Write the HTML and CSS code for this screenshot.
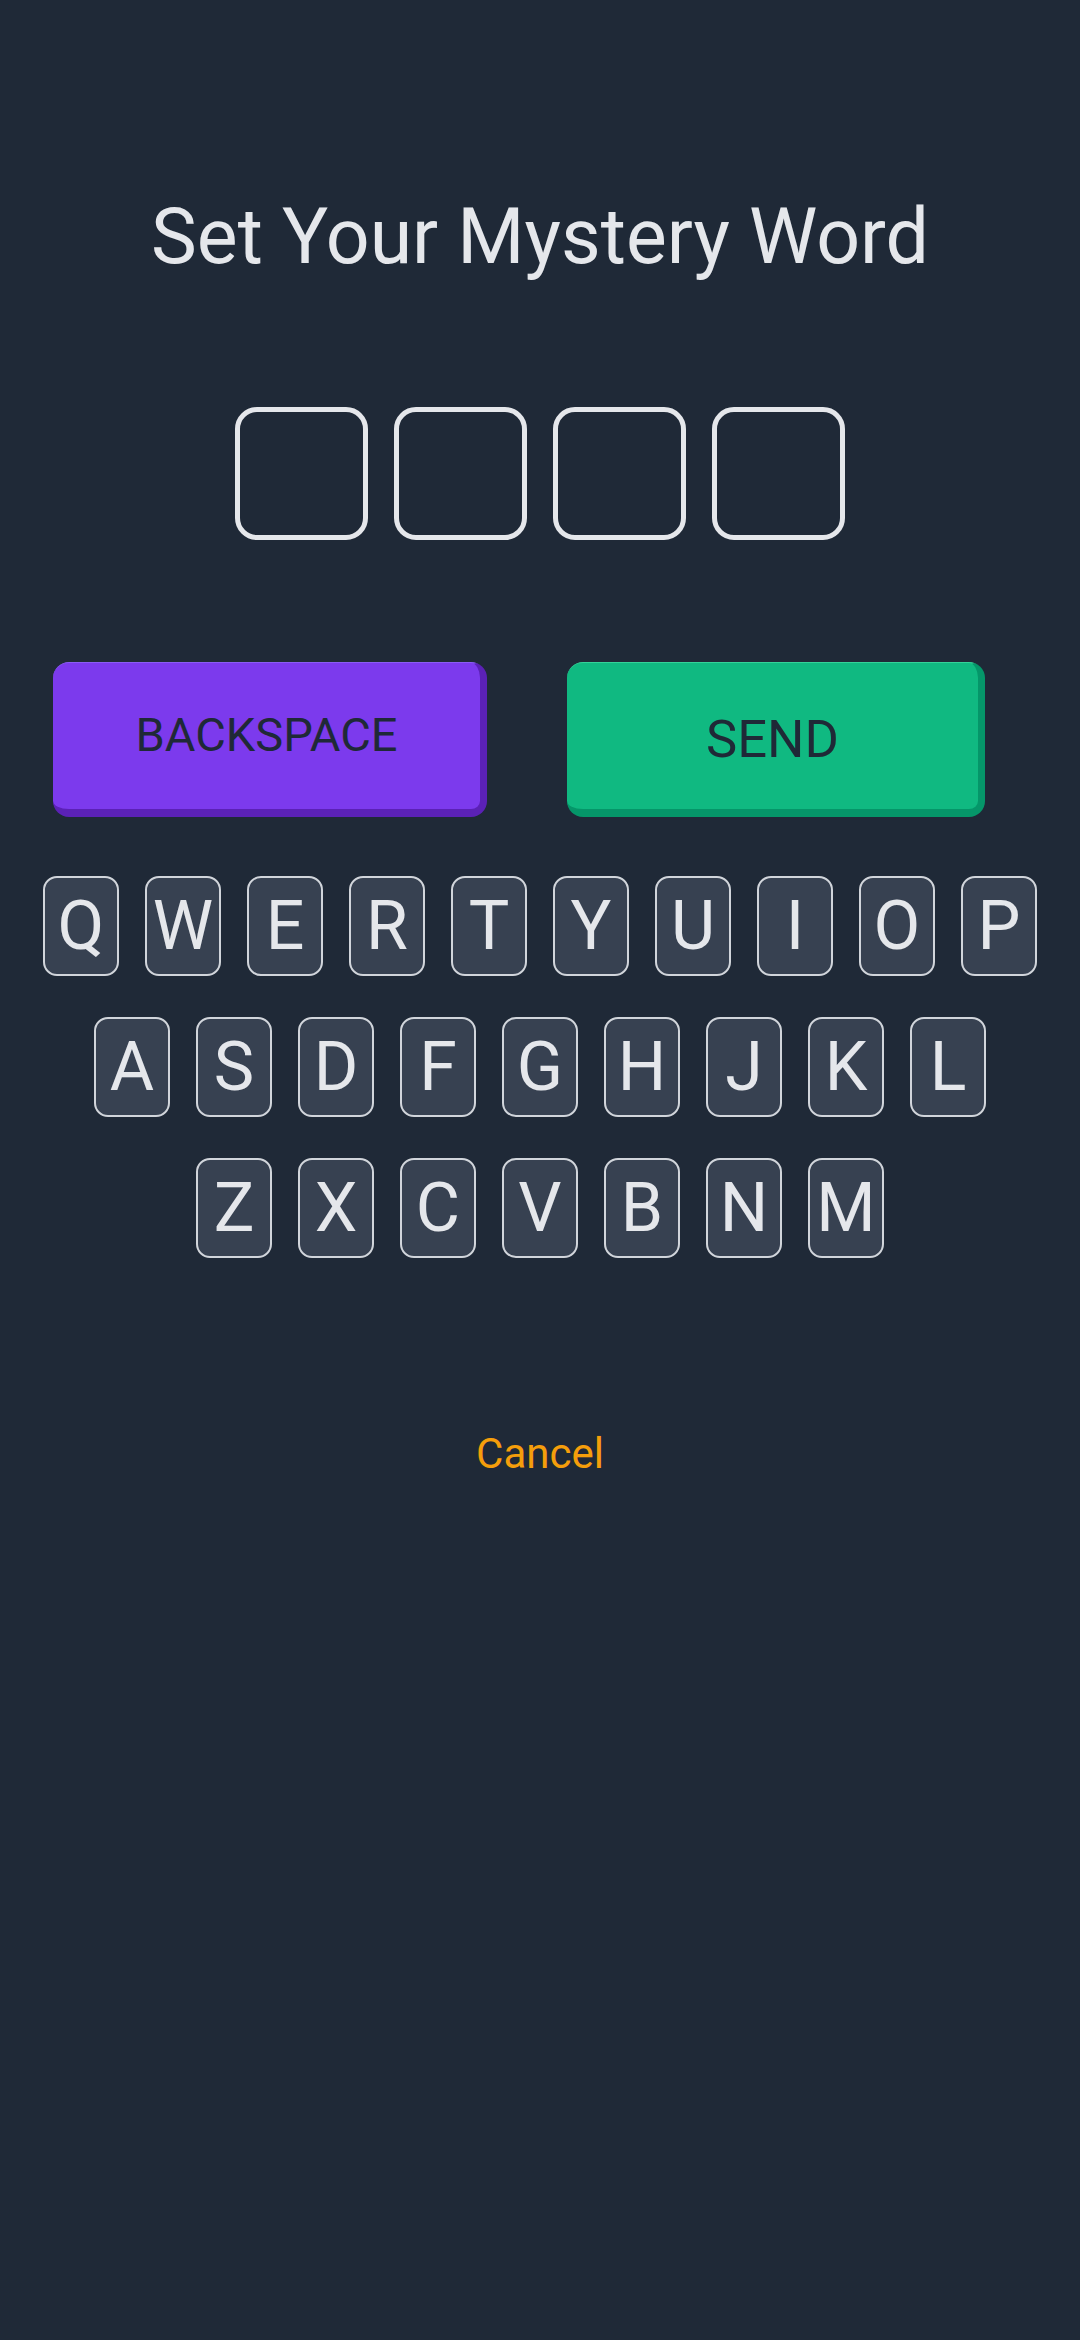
FILE: index.html
```html
<!DOCTYPE html>
<html>
<head>
<meta charset="utf-8">
<link rel="stylesheet" href="styles.css">
</head>
<body>
<main class="screen">
  <h1 class="title">Set Your Mystery Word</h1>
  <div class="slots">
    <div class="slot"></div>
    <div class="slot"></div>
    <div class="slot"></div>
    <div class="slot"></div>
  </div>
  <div class="actions">
    <button class="btn btn-back">BACKSPACE</button>
    <button class="btn btn-send">SEND</button>
  </div>
  <div class="keyboard">
    <div class="row">
      <span class="key">Q</span><span class="key">W</span><span class="key">E</span><span class="key">R</span><span class="key">T</span><span class="key">Y</span><span class="key">U</span><span class="key">I</span><span class="key">O</span><span class="key">P</span>
    </div>
    <div class="row">
      <span class="key">A</span><span class="key">S</span><span class="key">D</span><span class="key">F</span><span class="key">G</span><span class="key">H</span><span class="key">J</span><span class="key">K</span><span class="key">L</span>
    </div>
    <div class="row">
      <span class="key">Z</span><span class="key">X</span><span class="key">C</span><span class="key">V</span><span class="key">B</span><span class="key">N</span><span class="key">M</span>
    </div>
  </div>
  <div class="cancel">Cancel</div>
</main>
</body>
</html>
```

FILE: styles.css
```css
html, body {
  margin: 0;
  padding: 0;
  background: #1f2937;
}
body {
  width: 1080px;
  height: 2340px;
  font-family: Roboto, "Noto Sans", sans-serif;
  color: #e5e7eb;
}
.screen {
  display: flex;
  flex-direction: column;
  align-items: stretch;
}
.title {
  margin: 199px 0 0 0;
  font-size: 77px;
  line-height: 77px;
  font-weight: 400;
  text-align: center;
  color: #e5e7eb;
}
.slots {
  margin-top: 131px;
  display: flex;
  justify-content: center;
  gap: 26px;
}
.slot {
  width: 133px;
  height: 133px;
  box-sizing: border-box;
  border: 5px solid #e5e7eb;
  border-radius: 22px;
}
.actions {
  margin-top: 122px;
  display: flex;
  padding-left: 53px;
  gap: 80px;
}
.btn {
  height: 155px;
  box-sizing: border-box;
  border: none;
  border-top: 1px solid transparent;
  border-radius: 16px;
  border-right: 7px solid;
  border-bottom: 8px solid;
  font-family: Roboto, "Noto Sans", sans-serif;
  color: #1f2937;
  padding: 0;
  display: flex;
  align-items: center;
  justify-content: center;
}
.btn-back {
  width: 434px;
  background: #7c3aed;
  border-right-color: #5b21b6;
  border-bottom-color: #5b21b6;
  border-top-color: #8b5cf6;
  font-size: 47px;
  padding-bottom: 4px;
}
.btn-send {
  width: 418px;
  background: #10b981;
  border-right-color: #059669;
  border-bottom-color: #059669;
  border-top-color: #34d399;
  font-size: 52.5px;
  padding-top: 6px;
}
.keyboard {
  margin-top: 59px;
  display: flex;
  flex-direction: column;
  gap: 41px;
}
.row {
  display: flex;
  justify-content: center;
  gap: 26px;
}
.key {
  width: 76px;
  height: 100px;
  box-sizing: border-box;
  background: #374151;
  border: 2px solid #d1d5db;
  border-radius: 14px;
  display: flex;
  align-items: center;
  justify-content: center;
  font-size: 68px;
  line-height: 1;
  color: #e5e7eb;
}
.cancel {
  margin-top: 175px;
  font-size: 42px;
  line-height: 42px;
  text-align: center;
  color: #f59e0b;
}
```
